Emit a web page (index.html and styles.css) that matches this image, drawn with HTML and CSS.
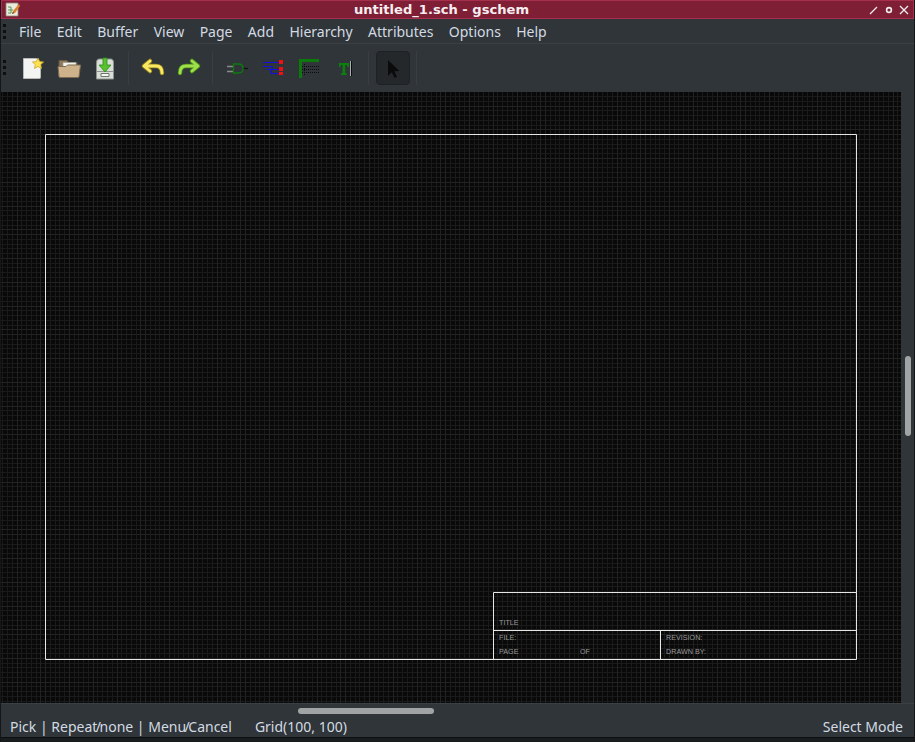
FILE: index.html
```html
<!DOCTYPE html>
<html lang="en">
<head>
<meta charset="utf-8">
<title>untitled_1.sch - gschem</title>
<link rel="stylesheet" href="styles.css">
</head>
<body>
<div class="window">
  <header class="titlebar">
    <svg class="app-icon" width="15" height="15" viewBox="0 0 15 15">
      <path d="M1 1h12v13H1z" fill="#eee9df" stroke="#8d8678" stroke-width=".8"/>
      <path d="M3 5h3M3 8h5M6 5v6M3 11h3" stroke="#4f9a52" stroke-width="1" fill="none"/>
      <path d="M14 2 8 9l-1 3 3-1 5-7z" fill="#d9822b"/>
      <path d="M7 12l1-2 1 1z" fill="#333"/>
    </svg>
    <div class="title">untitled_1.sch - gschem</div>
    <div class="wm-buttons">
      <svg width="10" height="10" viewBox="0 0 10 10"><path d="M1 9 8 2" stroke="#f4eef0" stroke-width="1.3"/></svg>
      <svg width="10" height="10" viewBox="0 0 10 10"><circle cx="5" cy="5" r="2.4" fill="none" stroke="#f4eef0" stroke-width="1.6"/></svg>
      <svg width="10" height="10" viewBox="0 0 10 10"><path d="M1 1l8 8M9 1 1 9" stroke="#f4eef0" stroke-width="1.3"/></svg>
    </div>
  </header>

  <nav class="menubar">
    <div class="grip"><i></i><i></i><i></i></div>
    <span class="menu-item">File</span>
    <span class="menu-item">Edit</span>
    <span class="menu-item">Buffer</span>
    <span class="menu-item">View</span>
    <span class="menu-item">Page</span>
    <span class="menu-item">Add</span>
    <span class="menu-item">Hierarchy</span>
    <span class="menu-item">Attributes</span>
    <span class="menu-item">Options</span>
    <span class="menu-item">Help</span>
  </nav>

  <div class="toolbar">
    <div class="grip tool-grip"><i></i><i></i><i></i></div>
    <div class="tool">
      <svg width="28" height="28" viewBox="0 0 28 28">
        <path d="M4.5 4.5h13l4 4v15a1 1 0 0 1-1 1h-16z" fill="#f4f4f2" stroke="#b9b9b5"/>
        <path d="m19 4 1.7 3.6 3.9.4-2.9 2.6.8 3.9-3.5-2-3.5 2 .8-3.9L13.400 8l3.900-.4z" fill="#ffe14d" stroke="#c9a92c" stroke-width=".8"/>
      </svg>
    </div>
    <div class="tool">
      <svg width="28" height="28" viewBox="0 0 28 28">
        <path d="M4 22V6.500h8l1.500 2H22V13H4z" fill="#8f7a5c" stroke="#6b5a42"/>
        <path d="M8 8.500h13V15H8z" fill="#f2f2ee" stroke="#9a9a94" stroke-width=".6"/>
        <path d="M3 12.500h8l1.500-1.500H25.500L24 22.500a1 1 0 0 1-1 1H5a1 1 0 0 1-1-1z" fill="#cdb28b" stroke="#7f6c50"/>
      </svg>
    </div>
    <div class="tool">
      <svg width="28" height="28" viewBox="0 0 28 28">
        <path d="M5.500 9c0-3 1-4 3-4h11c2 0 3 1 3 4v16h-17z" fill="#d9ded8" stroke="#8d938c"/>
        <path d="M5.500 17.500h17" stroke="#8d938c"/>
        <path d="M10 19.500h8v3h-8z" fill="#f5f5f2" stroke="#6f746e"/>
        <path d="M12 4h4v7h4l-6 7-6-7h4z" fill="#58c22c" stroke="#2f8a1a" stroke-width=".8"/>
      </svg>
    </div>
    <div class="tool-sep"></div>
    <div class="tool">
      <svg width="28" height="28" viewBox="0 0 28 28">
        <path d="M11 7 5 12l6 5M6 12h11c4 0 6 2 6 7" fill="none" stroke="#8f8120" stroke-width="4.500" stroke-linecap="round" stroke-linejoin="round"/>
        <path d="M11 7 5 12l6 5M6 12h11c4 0 6 2 6 7" fill="none" stroke="#fbe862" stroke-width="2.800" stroke-linecap="round" stroke-linejoin="round"/>
      </svg>
    </div>
    <div class="tool">
      <svg width="28" height="28" viewBox="0 0 28 28">
        <path d="m17 7 6 5-6 5M22 12H11c-4 0-6 2-6 7" fill="none" stroke="#4b8a1c" stroke-width="4.500" stroke-linecap="round" stroke-linejoin="round"/>
        <path d="m17 7 6 5-6 5M22 12H11c-4 0-6 2-6 7" fill="none" stroke="#9fe04a" stroke-width="2.800" stroke-linecap="round" stroke-linejoin="round"/>
      </svg>
    </div>
    <div class="tool-sep"></div>
    <div class="tool">
      <svg width="28" height="28" viewBox="0 0 28 28">
        <path d="M4 12.500h6M4 17.500h6" stroke="#8a8a8a" stroke-width="1.500"/>
        <path d="M20 14.500h5" stroke="#111" stroke-width="1.200"/>
        <path d="M10.500 10h5c3 0 4.500 2 4.500 4.500S18.500 19 15.500 19h-5z" fill="none" stroke="#0d7a0d" stroke-width="1.300"/>
      </svg>
    </div>
    <div class="tool">
      <svg width="28" height="28" viewBox="0 0 28 28">
        <path d="M4 8.500h18M4 12.500h9v3h9M8 15.500h4v4h10" fill="none" stroke="#1010e0" stroke-width="1.200"/>
        <path d="M20 6h4v4h-4zM20 13h4v4h-4zM20 18h4v3h-4z" fill="#ee1111"/>
      </svg>
    </div>
    <div class="tool">
      <svg width="28" height="28" viewBox="0 0 28 28">
        <path d="M5.500 24V6.500H24" fill="none" stroke="#0b7a0b" stroke-width="3"/>
        <path d="M7 12.500h17M7 15.500h17M7 18.500h17M9.500 10v11" fill="none" stroke="#0c0c0c" stroke-width="1" stroke-dasharray="1 1"/>
      </svg>
    </div>
    <div class="tool">
      <svg width="28" height="28" viewBox="0 0 28 28">
        <path d="M8 9h10v4h-1.500l-.5-2h-1.800v8l1.500.5V21H10v-1.500l1.500-.5v-8H9.800l-.5 2H8z" fill="#0c800c"/>
        <path d="M19.500 7v15" stroke="#aab0b2" stroke-width="1"/>
        <path d="M20.500 7v15" stroke="#0c0c0c" stroke-width="1"/>
      </svg>
    </div>
    <div class="tool-sep"></div>
    <div class="tool tool-active">
      <svg width="28" height="28" viewBox="0 0 28 28">
        <path d="M10 7v16l3.800-3.700 2.700 5.700 2.500-1.200-2.700-5.500 5-.3z" fill="#0b0b0b" transform="translate(-1 -1)"/>
      </svg>
    </div>
    <div class="tool-sep"></div>
  </div>

  <main class="workspace">
    <div class="canvas">
      <svg class="schematic" width="900" height="611" viewBox="0 0 900 611">
        <defs>
          <pattern id="mesh" width="100" height="100" x="44" y="42" patternUnits="userSpaceOnUse">
            <path class="mesh-minor" d="M5.500 0v100M10.500 0v100M14.500 0v100M19.500 0v100M29.500 0v100M33.500 0v100M38.500 0v100M43.500 0v100M52.500 0v100M57.500 0v100M62.500 0v100M67.500 0v100M76.500 0v100M81.500 0v100M86.500 0v100M91.500 0v100M0 5.500h100M0 10.500h100M0 14.500h100M0 19.500h100M0 29.500h100M0 33.500h100M0 38.500h100M0 43.500h100M0 52.500h100M0 57.500h100M0 62.500h100M0 67.500h100M0 76.500h100M0 81.500h100M0 86.500h100M0 91.500h100"/>
            <path class="mesh-major" d="M.5 0v100M24.500 0v100M48.500 0v100M72.500 0v100M95.500 0v100M0 .5h100M0 24.500h100M0 48.500h100M0 72.500h100M0 95.500h100"/>
          </pattern>
        </defs>
        <rect width="900" height="611" fill="url(#mesh)"/>
        <path class="frame" d="M44.500 42.500h811v525h-811zM492.500 500.500h363M492.500 500.500v67M492.500 538.500h363M659.500 538.500v29"/>
        <text class="block-text" x="498" y="533">TITLE</text>
        <text class="block-text" x="498" y="548">FILE:</text>
        <text class="block-text" x="498" y="562">PAGE</text>
        <text class="block-text" x="579" y="562">OF</text>
        <text class="block-text" x="665" y="548">REVISION:</text>
        <text class="block-text" x="665" y="562">DRAWN BY:</text>
      </svg>
    </div>
    <div class="vscroll"><div class="vthumb"></div></div>
    <div class="hscroll"><div class="hthumb"></div></div>
  </main>

  <footer class="statusbar">
    <span class="status-keys">Pick | Repeat<span class="slash">/</span>none | Menu<span class="slash">/</span>Cancel</span>
    <span class="status-grid">Grid(100, 100)</span>
    <span class="status-mode">Select Mode</span>
  </footer>
  <div class="resize-edge"></div>
</div>
</body>
</html>
```

FILE: styles.css
```css
* { box-sizing: border-box; }
html, body { margin: 0; padding: 0; }
body {
  width: 915px;
  height: 742px;
  overflow: hidden;
  background: #101112;
  font-family: "Noto Sans", "Open Sans", sans-serif;
}
.window {
  width: 915px;
  height: 742px;
  display: flex;
  flex-direction: column;
  background: #2f3538;
  border-left: 1px solid #141617;
  border-right: 1px solid #141617;
}
.titlebar {
  height: 19px;
  flex: none;
  display: flex;
  align-items: center;
  padding: 0 4px 0 3px;
  background: #7e1f35;
  border: 1px solid #a52f4c;
  box-shadow: 0 -1px 0 #141617;
  color: #f6eef0;
}
.app-icon { flex: none; }
.title {
  flex: 1;
  padding-right: 6px;
  text-align: center;
  font-family: "DejaVu Sans", sans-serif;
  font-weight: 700;
  font-size: 13.100px;
  line-height: 17px;
}
.wm-buttons {
  flex: none;
  display: flex;
  gap: 5px;
}
.menubar {
  height: 25px;
  flex: none;
  display: flex;
  align-items: center;
  padding-left: 10.300px;
  color: #d3dae3;
  font-size: 14px;
  border-bottom: 1px solid #3a4043;
}
.grip {
  position: absolute;
  left: 3px;
  display: flex;
  flex-direction: column;
  gap: 3px;
}
.grip i {
  display: block;
  width: 3px;
  height: 3px;
  background: #0d0f10;
}
.menu-item {
  padding: 0 7.700px;
  line-height: 25px;
}
.toolbar {
  height: 48px;
  flex: none;
  display: flex;
  align-items: center;
  padding: 0 0 1px 14px;
}
.tool {
  width: 36px;
  height: 34px;
  flex: none;
  display: flex;
  align-items: center;
  justify-content: center;
}
.tool-active {
  width: 34px;
  margin: 0 1px;
  background: #25282b;
  border: 1px solid #1f2224;
  border-radius: 4px;
}
.tool-sep {
  width: 1px;
  height: 34px;
  margin: 0 6px 0 5px;
  background: #383e41;
  flex: none;
}
.workspace {
  flex: none;
  height: 625px;
  display: grid;
  grid-template-columns: 900px 13px;
  grid-template-rows: 611px 14px;
  background: #2f3538;
}
.canvas {
  background: #090909;
  overflow: hidden;
}
.schematic { display: block; }
.mesh-minor { stroke: #1a1a1a; stroke-width: 1; fill: none; }
.mesh-major { stroke: #222222; stroke-width: 1; fill: none; }
.frame { stroke: #e6e6e6; stroke-width: 1; fill: none; }
.block-text {
  font-family: "Liberation Sans", Arial, sans-serif;
  font-size: 7.200px;
  fill: #999999;
}
.vscroll { padding: 264px 0 0 4px; }
.vthumb {
  width: 6px;
  height: 80px;
  border-radius: 3px;
  background: #a0a4a5;
}
.hscroll {
  grid-column: 1 / -1;
  padding: 4px 0 0 297px;
  border-top: 1px solid #3a4043;
}
.hthumb {
  width: 136px;
  height: 6px;
  border-radius: 3px;
  background: #a0a4a5;
}
.statusbar {
  height: 20px;
  flex: none;
  display: flex;
  align-items: center;
  padding: 0 11px 1px 9px;
  color: #d3dae3;
  font-size: 14px;
}
.slash { margin: 0 -1.500px; }
.status-grid { margin-left: 23px; }
.status-mode { margin-left: auto; }
.resize-edge {
  flex: none;
  height: 5px;
  background: #1a1d1e;
  border-top: 1px solid #0d0e0f;
}
```
